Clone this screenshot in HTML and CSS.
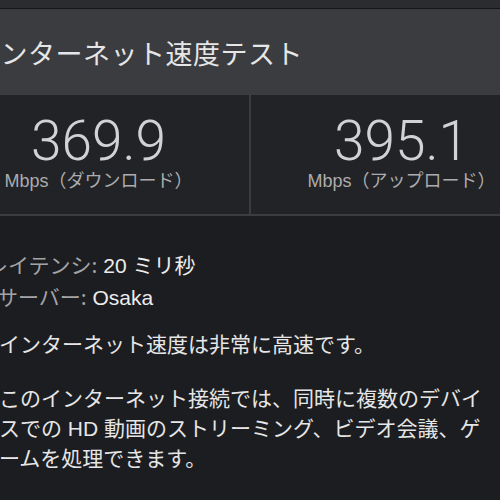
FILE: index.html
```html
<!DOCTYPE html>
<html lang="ja">
<head>
    <meta charset="UTF-8">
    <meta name="viewport" content="width=device-width, initial-scale=1.0">
    <title>インターネット速度テスト</title>
    <link rel="stylesheet" href="styles.css">
</head>
<body>
    <div class="top-strip"></div>
    <div class="card">
        <header class="card-header">
            <h1>インターネット速度テスト</h1>
        </header>

        <div class="speeds">
            <div class="speed">
                <div class="speed-value">369.9</div>
                <div class="speed-unit">Mbps（ダウンロード）</div>
            </div>
            <div class="speed">
                <div class="speed-value">395.1</div>
                <div class="speed-unit">Mbps（アップロード）</div>
            </div>
        </div>

        <div class="details">
            <div class="meta">
                <div class="meta-row meta-latency">
                    <span class="meta-label">レイテンシ:</span> <span class="meta-value">20 ミリ秒</span>
                </div>
                <div class="meta-row meta-server">
                    <span class="meta-label">サーバー:</span> <span class="meta-value">Osaka</span>
                </div>
            </div>

            <p class="summary">インターネット速度は非常に高速です。</p>
            <p class="summary">このインターネット接続では、同時に複数のデバイスでの HD 動画のストリーミング、ビデオ会議、ゲームを処理できます。</p>
        </div>
    </div>
</body>
</html>
```

FILE: styles.css
```css
body {
    font-family: "Liberation Sans", "Noto Sans CJK JP", sans-serif;
    background-color: #1c1d20;
    margin: 0;
    padding: 0;
    overflow: hidden;
}

.top-strip {
    height: 8px;
    background-color: #2b2c30;
    border-bottom: 1px solid #151619;
}

/* the card is wider than the window, the screenshot cuts both sides */
.card {
    margin: 0 -52px;
}

.card-header {
    height: 86px;
    display: flex;
    align-items: center;
    padding-left: 25px;
    background-color: #3a3c40;
}

.card-header h1 {
    margin: 0;
    font-family: "Noto Sans CJK JP", sans-serif;
    font-size: 27px;
    font-weight: 400;
    color: #e6e6e7;
    letter-spacing: 0.5px;
}

.speeds {
    display: grid;
    grid-template-columns: 1fr 1fr;
    column-gap: 2px;
    background-color: #3b3c40;
    border-bottom: 2px solid #3b3c40;
}

.speed {
    background-color: #222327;
    height: 119px;
    display: flex;
    flex-direction: column;
    align-items: center;
    padding-top: 19px;
    box-sizing: border-box;
}

.speed-value {
    font-family: Roboto, Lato, "Liberation Sans", sans-serif;
    font-weight: 300;
    font-size: 55px;
    line-height: 55px;
    color: #d2d2d4;
}

.speed-unit {
    font-family: "Liberation Sans", "Noto Sans CJK JP", sans-serif;
    font-size: 18px;
    line-height: 22px;
    color: #acacae;
    margin-top: 1px;
}

.details {
    padding: 33px 51px 0;
}

.meta-row {
    font-size: 21px;
    line-height: 30px;
}

.meta-latency {
    margin-left: -12px;
}

.meta-server {
    margin-left: -2px;
}

.meta-label {
    font-family: "Noto Sans CJK JP", sans-serif;
    color: #a3a3a6;
}

.meta-value {
    color: #ececed;
}

.summary {
    margin: 17px 0 0;
    font-family: "Liberation Sans", "Noto Sans CJK JP", sans-serif;
    font-size: 21px;
    line-height: 30px;
    color: #e6e6e7;
    line-break: loose;
}

.summary + .summary {
    margin-top: 24px;
}
```
